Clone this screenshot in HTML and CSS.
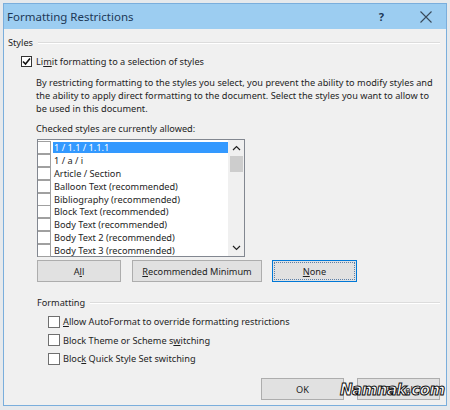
FILE: index.html
```html
<!DOCTYPE html>
<html lang="en">
<head>
    <meta charset="UTF-8">
    <title>Formatting Restrictions</title>
    <link rel="stylesheet" href="styles.css">
</head>
<body>
    <div class="window">
        <div class="titlebar">
            <span class="title">Formatting Restrictions</span>
            <span class="help">?</span>
            <svg class="close" width="12" height="12" viewBox="0 0 12 12">
                <path d="M0.5 0.5 L11.5 11.5 M11.5 0.5 L0.5 11.5" stroke="#3a4a5a" stroke-width="1.1" fill="none"/>
            </svg>
        </div>

        <div class="content">
            <div class="group-head">
                <span>Styles</span>
                <div class="rule"></div>
            </div>

            <label class="check-row limit">
                <span class="box checked">
                    <svg width="9" height="9" viewBox="0 0 9 9"><path d="M1 4.5 L3.5 7 L8 1.5" stroke="#111" stroke-width="1.6" fill="none"/></svg>
                </span>
                <span>Li<u>m</u>it formatting to a selection of styles</span>
            </label>

            <p class="info">By restricting formatting to the styles you select, you prevent the ability to modify styles and<br>the ability to apply direct formatting to the document. Select the styles you want to allow to<br>be used in this document.</p>

            <div class="list-caption">Checked styles are currently allowed:</div>

            <div class="listbox">
                <div class="rows">
                    <div class="row selected"><span class="cell"></span><span class="name">1 / 1.1 / 1.1.1</span></div>
                    <div class="row"><span class="cell"></span><span class="name">1 / a / i</span></div>
                    <div class="row"><span class="cell"></span><span class="name">Article / Section</span></div>
                    <div class="row"><span class="cell"></span><span class="name">Balloon Text (recommended)</span></div>
                    <div class="row"><span class="cell"></span><span class="name">Bibliography (recommended)</span></div>
                    <div class="row"><span class="cell"></span><span class="name">Block Text (recommended)</span></div>
                    <div class="row"><span class="cell"></span><span class="name">Body Text (recommended)</span></div>
                    <div class="row"><span class="cell"></span><span class="name">Body Text 2 (recommended)</span></div>
                    <div class="row"><span class="cell"></span><span class="name">Body Text 3 (recommended)</span></div>
                </div>
                <div class="scrollbar">
                    <svg class="arrow" width="9" height="6" viewBox="0 0 9 6"><path d="M1 5 L4.5 1.5 L8 5" stroke="#222" stroke-width="1.2" fill="none"/></svg>
                    <div class="thumb"></div>
                    <div class="track"></div>
                    <svg class="arrow" width="9" height="6" viewBox="0 0 9 6"><path d="M1 1 L4.5 4.5 L8 1" stroke="#222" stroke-width="1.2" fill="none"/></svg>
                </div>
            </div>

            <div class="list-buttons">
                <button class="btn all">A<u>l</u>l</button>
                <button class="btn recommended"><u>R</u>ecommended Minimum</button>
                <button class="btn none default"><span class="focus"><u>N</u>one</span></button>
            </div>

            <div class="group-head formatting">
                <span>Formatting</span>
                <div class="rule"></div>
            </div>

            <div class="options">
                <label class="check-row"><span class="box"></span><span><u>A</u>llow AutoFormat to override formatting restrictions</span></label>
                <label class="check-row"><span class="box"></span><span>Block Theme or Scheme s<u>w</u>itching</span></label>
                <label class="check-row"><span class="box"></span><span>Bloc<u>k</u> Quick Style Set switching</span></label>
            </div>

            <div class="footer">
                <button class="btn ok">OK</button>
                <button class="btn cancel">Cancel</button>
                <span class="watermark">Namnak.com</span>
            </div>
        </div>
    </div>
</body>
</html>
```

FILE: styles.css
```css
* {
    box-sizing: border-box;
}

body {
    margin: 0;
    padding: 3px 3px 0 3px;
    width: 450px;
    height: 410px;
    background: #e6e9ec;
    font-family: "Noto Sans", "Open Sans", sans-serif;
    font-size: 9.2px;
    color: #1e1e1e;
    overflow: hidden;
}

.window {
    width: 444px;
    height: 403px;
    border: 1px solid #7aaedc;
    background: #f0f0f0;
    display: flex;
    flex-direction: column;
}

.titlebar {
    flex-shrink: 0;
    height: 25px;
    background: #9ccdf1;
    display: flex;
    align-items: center;
    padding-left: 3px;
}

.title {
    font-size: 11.5px;
    color: #1d3856;
    flex: 1;
}

.help {
    font-size: 11px;
    font-weight: bold;
    color: #1d3856;
    margin-right: 36px;
}

.close {
    margin-right: 14px;
}

.content {
    flex: 1;
    padding: 7px 6px 0 4px;
    display: flex;
    flex-direction: column;
}

.group-head {
    flex-shrink: 0;
    display: flex;
    align-items: center;
    height: 13px;
    line-height: 13px;
}

.group-head .rule {
    flex: 1;
    height: 2px;
    border-top: 1px solid #dcdcdc;
    border-bottom: 1px solid #ffffff;
    margin-left: 5px;
}

.check-row {
    display: flex;
    align-items: center;
    height: 13px;
    line-height: 13px;
    white-space: nowrap;
}

.box {
    width: 11px;
    height: 11px;
    border: 1px solid #333;
    background: #fff;
    margin-right: 4px;
    display: flex;
    align-items: center;
    justify-content: center;
}

.limit {
    margin: 6px 0 0 13px;
}

.info {
    margin: 8px 0 0 28px;
    line-height: 13px;
    white-space: nowrap;
}

.list-caption {
    margin: 7px 0 0 28px;
    line-height: 13px;
}

.listbox {
    flex-shrink: 0;
    margin: 4px 0 0 29px;
    width: 208px;
    height: 118px;
    border: 1px solid #828790;
    background: #fff;
    display: flex;
}

.rows {
    flex: 1;
    padding-top: 1px;
    white-space: nowrap;
}

.row {
    height: 12.9px;
    display: flex;
    align-items: center;
}

.cell {
    width: 13px;
    height: 13px;
    border: 1px solid #a0a0a0;
    border-left: none;
    background: #fff;
    margin-right: 2px;
}

.name {
    flex: 1;
    line-height: 11px;
    padding-left: 1px;
}

.row.selected .name {
    background: #3399ff;
    color: #fff;
}

.scrollbar {
    width: 16px;
    background: #f0f0f0;
    display: flex;
    flex-direction: column;
    align-items: center;
}

.arrow {
    margin: 5px 0;
}

.thumb {
    width: 13px;
    height: 16px;
    background: #cdcdcd;
}

.track {
    flex: 1;
}

.list-buttons {
    flex-shrink: 0;
    display: flex;
    margin: 3px 0 0 29px;
}

.btn {
    height: 22px;
    border: 1px solid #adadad;
    background: #e1e1e1;
    font-family: inherit;
    font-size: 9.2px;
    color: #1e1e1e;
    padding: 0;
}

.all {
    width: 84px;
}

.recommended {
    width: 130px;
    margin-left: 11px;
}

.none {
    width: 85px;
    margin-left: 10px;
}

.default {
    border-color: #0078d7;
    padding: 1px;
}

.focus {
    display: flex;
    align-items: center;
    justify-content: center;
    height: 100%;
    border: 1px dotted #5a7fa8;
}

.formatting {
    margin: 14px 0 0 29px;
}

.options {
    margin: 6px 0 0 40px;
    display: flex;
    flex-direction: column;
    gap: 5.5px;
}

.options .box {
    width: 12px;
    height: 12px;
    border-color: #6f6f6f;
    margin-right: 3px;
}

.footer {
    flex-shrink: 0;
    display: flex;
    margin: 13px 0 0 253px;
    position: relative;
}

.ok,
.cancel {
    width: 83px;
}

.cancel {
    margin-left: 13px;
}

.watermark {
    position: absolute;
    left: 79px;
    top: 1px;
    font-family: "DejaVu Sans", sans-serif;
    font-size: 15px;
    font-style: italic;
    font-weight: bold;
    letter-spacing: -0.5px;
    color: #fff;
    -webkit-text-stroke: 1px #111;
    line-height: 22px;
}
```
